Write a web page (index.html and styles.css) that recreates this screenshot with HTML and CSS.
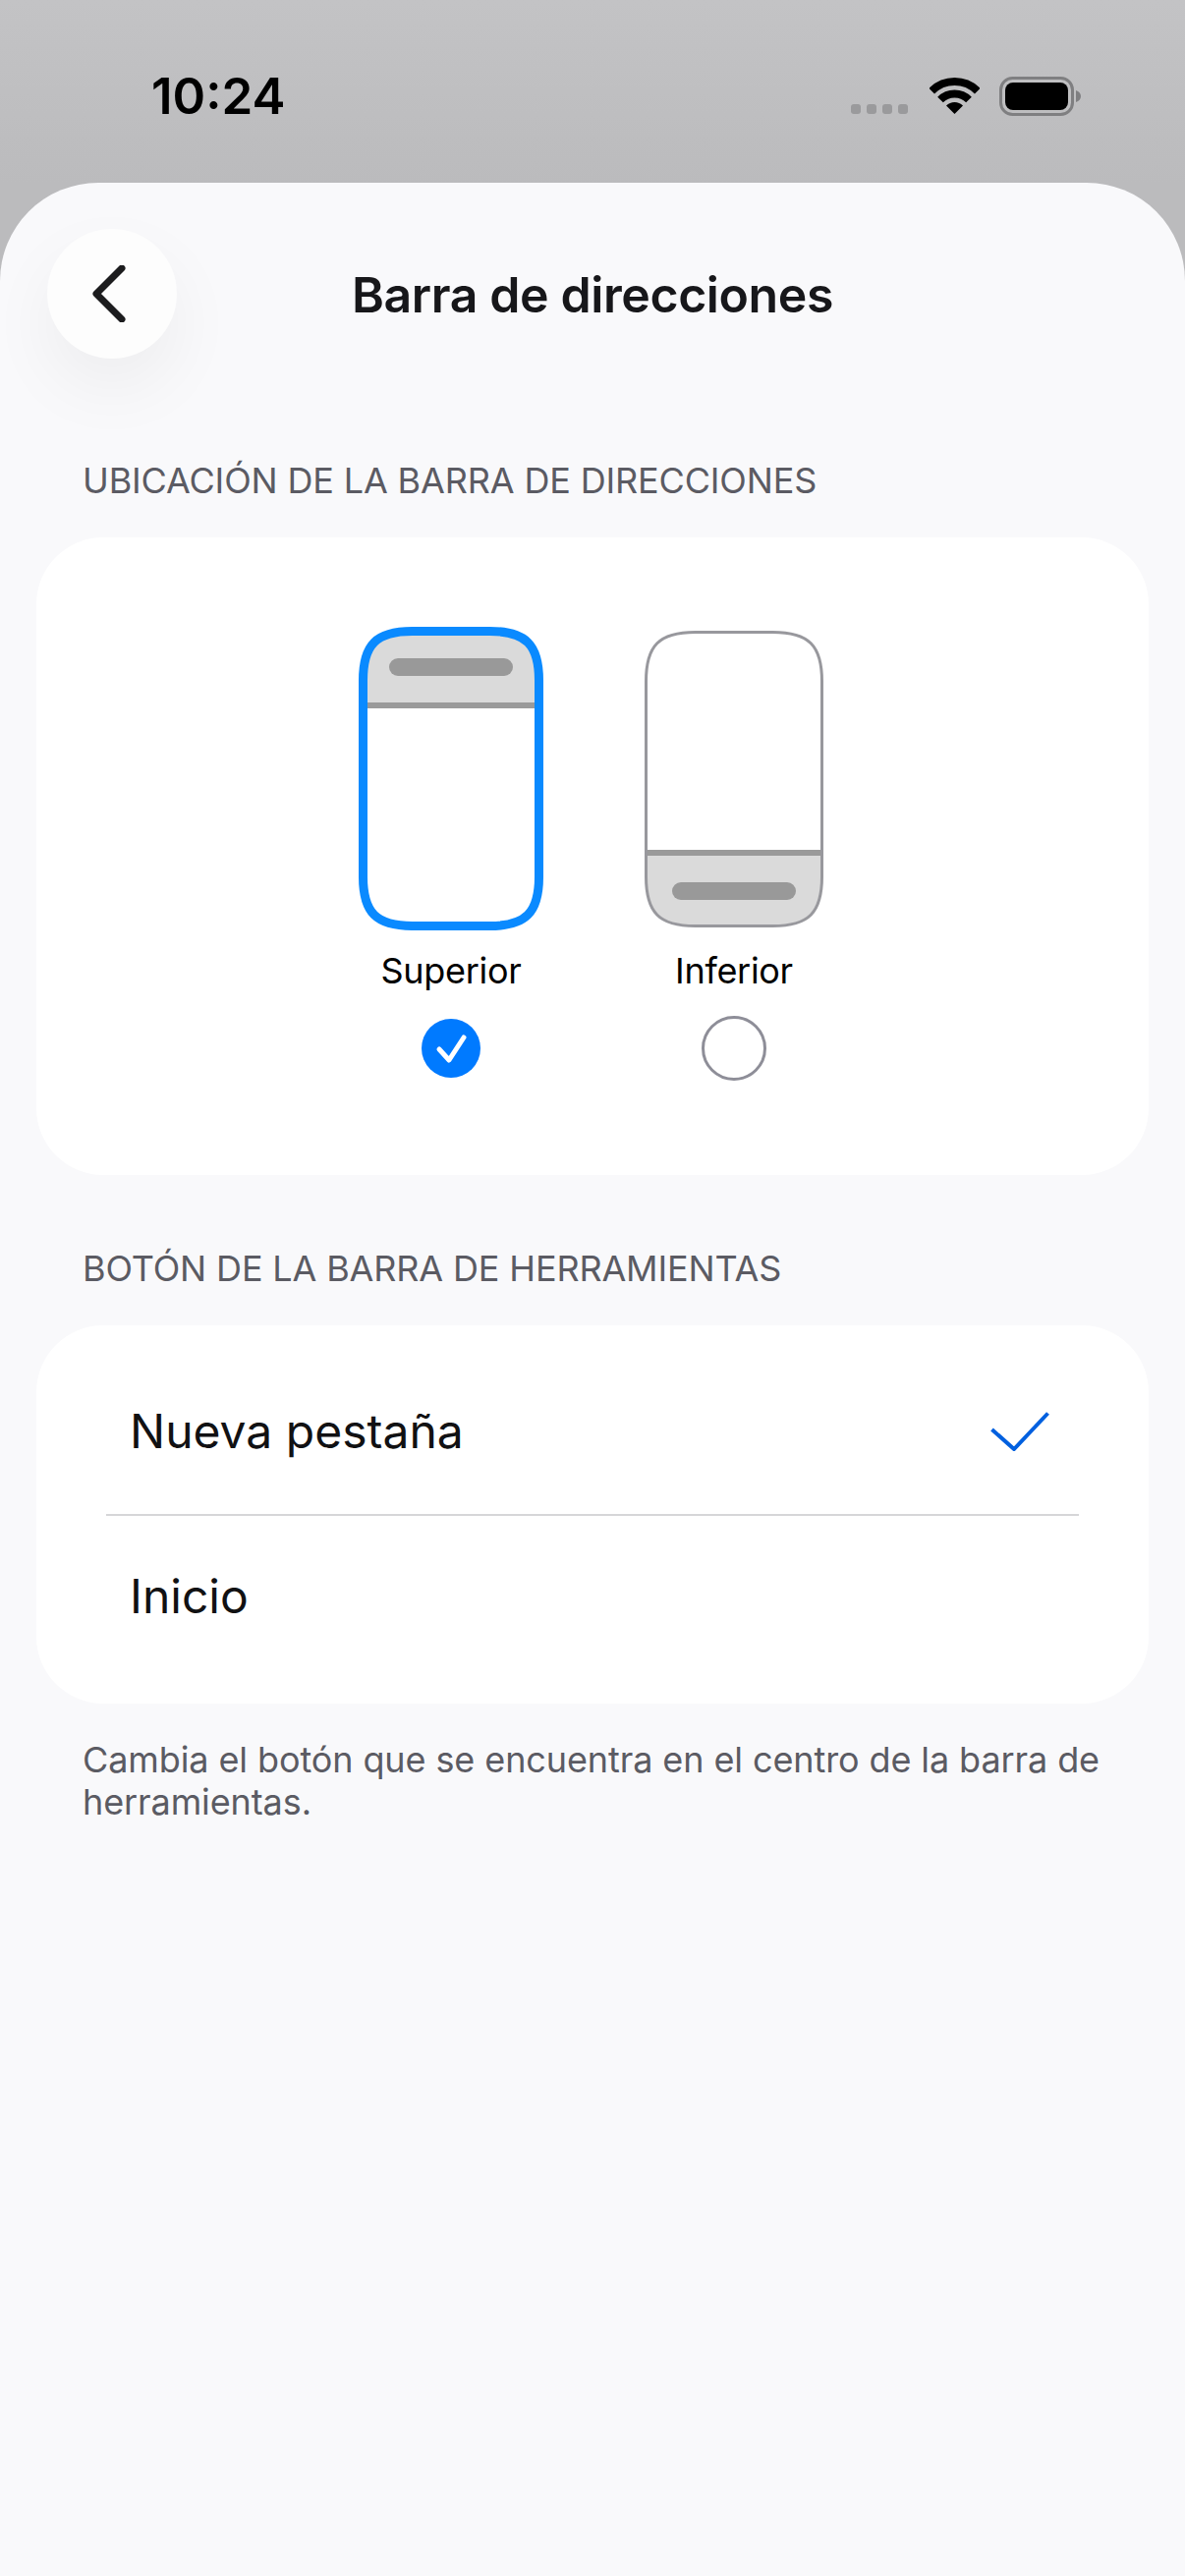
FILE: index.html
```html
<!DOCTYPE html>
<html lang="es">
<head>
    <meta charset="UTF-8">
    <title>Barra de direcciones</title>
    <link rel="stylesheet" href="styles.css">
</head>
<body>
    <div class="status">
        <span class="time">10:24</span>
        <div class="status-icons">
            <div class="signal"><i></i><i></i><i></i><i></i></div>
            <svg class="wifi" width="51" height="37" viewBox="0 0 51 37">
                <path d="M2.2 13.7A33 33 0 0 1 48.8 13.7" fill="none" stroke="#000" stroke-width="8"/>
                <path d="M11 22.5A20.5 20.5 0 0 1 40 22.5" fill="none" stroke="#000" stroke-width="8"/>
                <path d="M25.5 37L17 28.5A12 12 0 0 1 34 28.5Z" fill="#000"/>
            </svg>
            <svg class="battery" width="83" height="40" viewBox="0 0 83 40">
                <rect x="1.5" y="1.5" width="73" height="37" rx="12" fill="none" stroke="#7f7f81" stroke-width="3"/>
                <rect x="6" y="6" width="64" height="28" rx="8" fill="#000"/>
                <path d="M78 14C81 15 83 17 83 20C83 23 81 25 78 26Z" fill="#7f7f81"/>
            </svg>
        </div>
    </div>

    <div class="sheet">
        <div class="header">
            <button class="back">
                <svg width="36" height="58" viewBox="0 0 36 58">
                    <path d="M31 3L5 29L31 55" fill="none" stroke="#1c1c1e" stroke-width="7" stroke-linecap="round" stroke-linejoin="round"/>
                </svg>
            </button>
            <h1>Barra de direcciones</h1>
        </div>

        <p class="section-label">UBICACIÓN DE LA BARRA DE DIRECCIONES</p>
        <div class="card positions">
            <div class="position">
                <div class="thumb">
                    <svg width="188" height="309" viewBox="0 0 188 309">
                        <defs>
                            <path id="shapeTop" d="M54.5 4.500H133.500C170 4.500 183.500 18 183.500 54.500V254.500C183.500 291 170 304.500 133.500 304.500H54.500C18 304.500 4.500 291 4.500 254.500V54.500C4.500 18 18 4.500 54.500 4.500Z"/>
                            <clipPath id="clipTop"><use href="#shapeTop"/></clipPath>
                        </defs>
                        <use href="#shapeTop" fill="#fff"/>
                        <rect x="0" y="0" width="188" height="78" fill="#dadada" clip-path="url(#clipTop)"/>
                        <rect x="4" y="77" width="180" height="6" fill="#9a9a9a"/>
                        <rect x="31" y="32" width="126" height="18" rx="9" fill="#999"/>
                        <use href="#shapeTop" fill="none" stroke="#0a8aff" stroke-width="9"/>
                    </svg>
                </div>
                <span class="position-name">Superior</span>
                <div class="mark">
                    <svg width="60" height="60" viewBox="0 0 60 60">
                        <circle cx="30" cy="30" r="30" fill="#007aff"/>
                        <path d="M18 31L28 42L43 19" fill="none" stroke="#fff" stroke-width="5" stroke-linecap="round" stroke-linejoin="round"/>
                    </svg>
                </div>
            </div>
            <div class="position">
                <div class="thumb">
                    <svg width="182" height="302" viewBox="0 0 182 302">
                        <defs>
                            <path id="shapeBottom" d="M51.500 1.500H130.500C167 1.500 180.500 15 180.500 51.500V250.500C180.500 287 167 300.500 130.500 300.500H51.500C15 300.500 1.500 287 1.500 250.500V51.500C1.500 15 15 1.500 51.500 1.500Z"/>
                            <clipPath id="clipBottom"><use href="#shapeBottom"/></clipPath>
                        </defs>
                        <use href="#shapeBottom" fill="#fff"/>
                        <rect x="0" y="225" width="182" height="77" fill="#dadada" clip-path="url(#clipBottom)"/>
                        <rect x="1" y="223" width="180" height="6" fill="#9a9a9a"/>
                        <rect x="28" y="256" width="126" height="18" rx="9" fill="#999"/>
                        <use href="#shapeBottom" fill="none" stroke="#98989d" stroke-width="3"/>
                    </svg>
                </div>
                <span class="position-name">Inferior</span>
                <div class="mark">
                    <svg width="66" height="66" viewBox="0 0 66 66">
                        <circle cx="33" cy="33" r="31.500" fill="none" stroke="#8e8e98" stroke-width="3"/>
                    </svg>
                </div>
            </div>
        </div>

        <p class="section-label second">BOTÓN DE LA BARRA DE HERRAMIENTAS</p>
        <div class="card options">
            <div class="option">
                <span>Nueva pestaña</span>
                <svg width="60" height="40" viewBox="0 0 60 40">
                    <path d="M1.500 18L24 38L58.500 1.500" fill="none" stroke="#0060df" stroke-width="4"/>
                </svg>
            </div>
            <div class="divider"></div>
            <div class="option last">
                <span>Inicio</span>
            </div>
        </div>
        <p class="footnote">Cambia el botón que se encuentra en el centro de la barra de herramientas.</p>
    </div>
</body>
</html>
```

FILE: styles.css
```css
html, body {
    margin: 0;
    height: 100%;
}

body {
    width: 1206px;
    min-height: 2622px;
    display: flex;
    flex-direction: column;
    font-family: Inter, "Liberation Sans", sans-serif;
    color: #1c1c1e;
    background: linear-gradient(#c3c3c5, #bbbbbd 186px);
}

/* status bar */
.status {
    height: 186px;
    flex: none;
    box-sizing: border-box;
    display: flex;
    justify-content: space-between;
    padding: 68px 106px 0 154px;
}

.time {
    font-size: 51px;
    font-weight: 600;
    line-height: 60px;
    color: #000;
}

.status-icons {
    display: flex;
    align-items: flex-start;
    padding-top: 10px;
}

.signal {
    display: flex;
    gap: 6px;
    margin-top: 28px;
    margin-right: 22px;
}

.signal i {
    width: 10px;
    height: 10px;
    border-radius: 3px;
    background: #9a9a9c;
}

.wifi {
    margin-top: 1px;
    margin-right: 20px;
}

/* sheet */
.sheet {
    flex: 1;
    background: #f9f9fb;
    border-radius: 100px 100px 0 0;
}

.header {
    display: grid;
    grid-template-columns: 132px 1fr 132px;
    align-items: center;
    padding: 47px 48px 0;
}

.back {
    width: 132px;
    height: 132px;
    padding: 0;
    border: none;
    border-radius: 50%;
    background: #fdfdfd;
    box-shadow: 0 30px 70px rgba(0, 0, 0, 0.05);
    display: flex;
    align-items: center;
    justify-content: center;
}

.back svg {
    margin-left: -6px;
}

h1 {
    margin: 0;
    padding-top: 2px;
    font-size: 50px;
    font-weight: 600;
    line-height: 60px;
    letter-spacing: -0.4px;
    text-align: center;
    color: #17171a;
}

.section-label {
    margin: 102px 0 0;
    padding-left: 84px;
    font-size: 36px;
    line-height: 44px;
    letter-spacing: -0.15px;
    color: #5b5b63;
}

.section-label.second {
    margin-top: 73px;
}

.card {
    margin: 36px 37px 0;
    background: #fff;
    border-radius: 68px;
}

/* address bar position */
.positions {
    display: flex;
    justify-content: center;
    gap: 88px;
    height: 649px;
    box-sizing: border-box;
    padding-top: 91px;
}

.position {
    width: 200px;
    display: flex;
    flex-direction: column;
    align-items: center;
}

.thumb {
    height: 309px;
    display: flex;
    align-items: center;
}

.position-name {
    margin-top: 19px;
    font-size: 36px;
    line-height: 44px;
    letter-spacing: -0.3px;
    color: #000;
}

.mark {
    height: 66px;
    margin-top: 24px;
    display: flex;
    align-items: center;
}

/* toolbar button */
.options {
    height: 385px;
    box-sizing: border-box;
    padding-top: 23px;
}

.option {
    height: 169px;
    box-sizing: border-box;
    display: flex;
    align-items: center;
    justify-content: space-between;
    padding: 0 101px 0 95px;
    font-size: 48px;
    line-height: 60px;
    color: #111113;
}

.option.last {
    padding-bottom: 5px;
}

.divider {
    height: 2px;
    margin: 0 71px;
    background: #d6d6d8;
}

.footnote {
    margin: 36px 0 0;
    padding: 0 60px 0 84px;
    font-size: 36px;
    line-height: 43px;
    letter-spacing: -0.1px;
    color: #5b5b63;
}
```
